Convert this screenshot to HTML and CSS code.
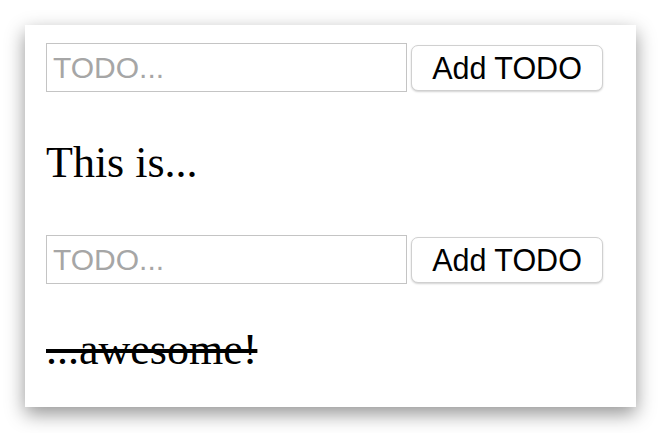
FILE: index.html
```html
<!DOCTYPE html>
<html>
<head>
<meta charset="utf-8">
<link rel="stylesheet" href="styles.css">
</head>
<body>
<div class="card">
  <div class="row">
    <input class="todo-input" type="text" placeholder="TODO...">
    <button class="add-btn">Add TODO</button>
  </div>
  <p class="item first">This is...</p>
  <div class="row second">
    <input class="todo-input" type="text" placeholder="TODO...">
    <button class="add-btn">Add TODO</button>
  </div>
  <p class="item done">...awesome!</p>
</div>
</body>
</html>
```

FILE: styles.css
```css
html, body {
  margin: 0;
  padding: 0;
  background: #ffffff;
}
body {
  padding: 25px 0 26px 25px;
  min-height: 433px;
  box-sizing: border-box;
}
.card {
  box-sizing: border-box;
  width: 611px;
  height: 382px;
  background: #fff;
  box-shadow: 0 7px 18px rgba(0, 0, 0, 0.42);
  padding: 18px 20px 0 21px;
  display: flex;
  flex-direction: column;
}
.row {
  display: flex;
  align-items: center;
  gap: 4px;
  height: 49px;
}
.todo-input {
  box-sizing: border-box;
  width: 361px;
  height: 49px;
  border: 1px solid #c4c4c4;
  margin: 0;
  padding: 0 6px;
  font-family: "Liberation Sans", Arial, sans-serif;
  font-size: 30px;
  color: #000;
  outline: none;
  background: #fff;
}
.todo-input::placeholder {
  color: #a6a6a6;
}
.add-btn {
  box-sizing: border-box;
  width: 192px;
  height: 46px;
  margin: 1px 0 0 0;
  padding: 0;
  border: 1px solid #d0d0d0;
  border-radius: 7px;
  background: #fff;
  box-shadow: 0 1px 2px rgba(0, 0, 0, 0.18);
  font-family: "Liberation Sans", Arial, sans-serif;
  font-size: 30.5px;
  color: #000;
}
.item {
  margin: 0;
  font-family: "Liberation Serif", "Times New Roman", serif;
  font-size: 44px;
  line-height: 50px;
  color: #000;
}
.item.first {
  margin-top: 46px;
}
.row.second {
  margin-top: 47px;
}
.item.done {
  margin-top: 41px;
  text-decoration: line-through;
}
```
